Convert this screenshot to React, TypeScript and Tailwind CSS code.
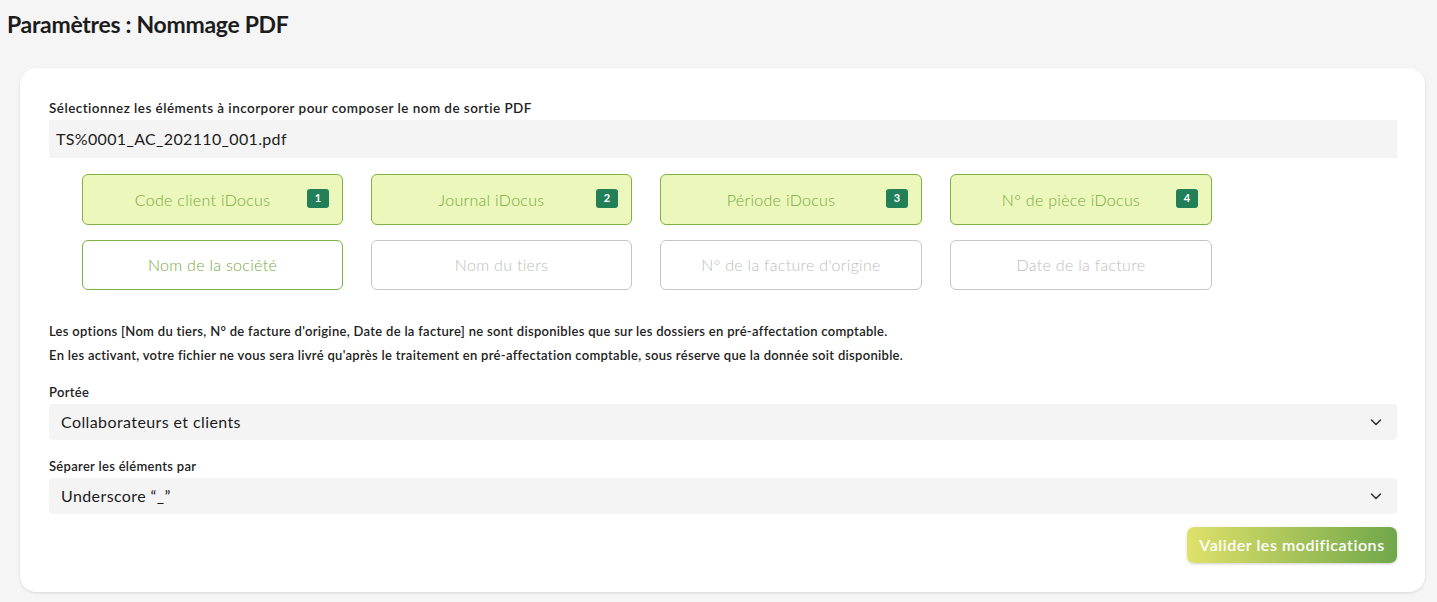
import React from "react";

const font = { fontFamily: "Lato, 'Noto Sans', sans-serif" };

function Chevron() {
  return (
    <svg width="14" height="14" viewBox="0 0 14 14" fill="none" className="shrink-0">
      <path d="M2.5 5 L7 9.5 L11.5 5" stroke="#333" strokeWidth="1.6" strokeLinecap="round" strokeLinejoin="round" />
    </svg>
  );
}

type Opt = { label: string; state: "on" | "green" | "off"; n?: number };

const options: Opt[] = [
  { label: "Code client iDocus", state: "on", n: 1 },
  { label: "Journal iDocus", state: "on", n: 2 },
  { label: "Période iDocus", state: "on", n: 3 },
  { label: "N° de pièce iDocus", state: "on", n: 4 },
  { label: "Nom de la société", state: "green" },
  { label: "Nom du tiers", state: "off" },
  { label: "N° de la facture d'origine", state: "off" },
  { label: "Date de la facture", state: "off" },
];

function OptionButton({ o }: { o: Opt }) {
  if (o.state === "on") {
    return (
      <div className="relative h-[51px] rounded-[6px] border border-[#7cb342] bg-[#ecf7bb] flex items-center justify-center pr-[20px] text-[16px] font-light tracking-[0.3px] text-[#76a940]">
        <span>{o.label}</span>
        <span className="absolute right-[13px] top-[14px] w-[22px] h-[19px] rounded-[3px] bg-[#237f58] text-white text-[11px] font-bold tracking-normal flex items-center justify-center">
          {o.n}
        </span>
      </div>
    );
  }
  if (o.state === "green") {
    return (
      <div className="h-[50px] rounded-[6px] border border-[#7cb342] bg-white flex items-center justify-center text-[16px] font-light tracking-[0.3px] text-[#76a940]">
        {o.label}
      </div>
    );
  }
  return (
    <div className="h-[50px] rounded-[6px] border border-[#c6c6c6] bg-white flex items-center justify-center text-[16px] font-light tracking-[0.3px] text-[#bdbdbd]">
      {o.label}
    </div>
  );
}

export default function App() {
  return (
    <div className="min-h-[602px] bg-[#f5f5f5] pl-[20px] pr-[12px] pt-[9px] pb-[10px]" style={font}>
      <h1 className="ml-[-13px] text-[23px] font-bold text-[#1c1c1c] leading-[30px] tracking-[-0.3px]">
        Paramètres : Nommage PDF
      </h1>
      <div className="mt-[29px] rounded-[16px] bg-white shadow-[0_1px_3px_rgba(0,0,0,0.12)] pl-[29px] pr-[28px] pt-[32px] pb-[29px]">
        <div className="text-[13.5px] font-semibold text-[#222] leading-[16px] tracking-[0.45px]">
          Sélectionnez les éléments à incorporer pour composer le nom de sortie PDF
        </div>
        <div className="mt-[4px] h-[38px] bg-[#f4f4f4] flex items-center pl-[7px] text-[16px] text-[#1c1c1c] tracking-[0.35px]">
          TS%0001_AC_202110_001.pdf
        </div>

        <div className="ml-[33px] mt-[16px] grid grid-cols-[261px_261px_262px_262px] gap-x-[28px] gap-y-[15px]">
          {options.map((o) => (
            <OptionButton key={o.label} o={o} />
          ))}
        </div>

        <div className="mt-[29px] text-[13px] font-semibold text-[#222] leading-[24px] tracking-[0.3px]">
          <div>
            Les options [Nom du tiers, N° de facture d'origine, Date de la facture] ne sont disponibles que sur les dossiers en pré-affectation comptable.
          </div>
          <div>
            En les activant, votre fichier ne vous sera livré qu'après le traitement en pré-affectation comptable, sous réserve que la donnée soit disponible.
          </div>
        </div>

        <div className="mt-[17px] text-[13px] font-semibold text-[#222] leading-[16px] tracking-[0.3px]">Portée</div>
        <div className="mt-[4px] h-[36px] rounded-[4px] bg-[#f4f4f4] flex items-center justify-between pl-[12px] pr-[14px] text-[16px] text-[#1c1c1c] tracking-[0.4px]">
          <span>Collaborateurs et clients</span>
          <Chevron />
        </div>

        <div className="mt-[18px] text-[13px] font-semibold text-[#222] leading-[16px] tracking-[0.3px]">Séparer les éléments par</div>
        <div className="mt-[4px] h-[36px] rounded-[4px] bg-[#f4f4f4] flex items-center justify-between pl-[12px] pr-[14px] text-[16px] text-[#1c1c1c] tracking-[0.4px]">
          <span>Underscore “_”</span>
          <Chevron />
        </div>

        <div className="mt-[13px] flex justify-end">
          <button className="h-[36px] w-[210px] rounded-[7px] bg-gradient-to-r from-[#dfe16a] to-[#70a74b] text-white text-[16px] font-semibold tracking-[0.55px] shadow-[0_1px_3px_rgba(0,0,0,0.2)]">
            Valider les modifications
          </button>
        </div>
      </div>
    </div>
  );
}
